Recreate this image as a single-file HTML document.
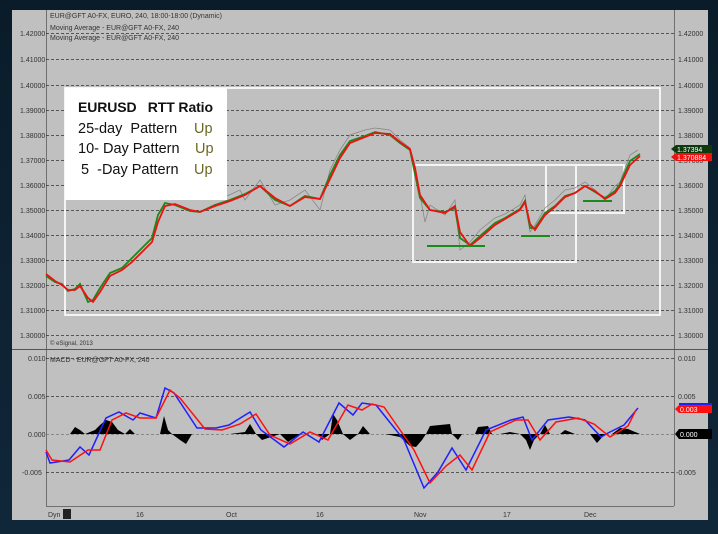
<!DOCTYPE html>
<html><head><meta charset="utf-8"><style>
body{margin:0;width:718px;height:534px;background:#0c2131;overflow:hidden;font-family:"Liberation Sans",sans-serif}
svg{position:absolute;left:0;top:0}
</style></head><body>
<svg width="718" height="534" viewBox="0 0 718 534">
<defs><linearGradient id="bg" x1="0" y1="0" x2="0" y2="1"><stop offset="0" stop-color="#0a1c2a"/><stop offset="1" stop-color="#10273a"/></linearGradient></defs>
<rect width="718" height="534" fill="url(#bg)"/>
<rect x="12" y="10" width="696" height="510" fill="#c0c0c0"/>
<g stroke="#707070" stroke-width="1" fill="none">
<line x1="46.5" y1="10" x2="46.5" y2="506"/>
<line x1="674.5" y1="10" x2="674.5" y2="506"/>
<line x1="12" y1="349.5" x2="708" y2="349.5" stroke="#555"/>
<line x1="46" y1="506.5" x2="674" y2="506.5"/>
</g>
<g stroke="#333" stroke-dasharray="3,2" stroke-width="0.8">
<line x1="46" y1="33.5" x2="674" y2="33.5"/><line x1="46" y1="59.5" x2="674" y2="59.5"/>
<line x1="46" y1="85.5" x2="674" y2="85.5"/><line x1="46" y1="110.5" x2="674" y2="110.5"/>
<line x1="46" y1="135.5" x2="674" y2="135.5"/><line x1="46" y1="160.5" x2="674" y2="160.5"/>
<line x1="46" y1="185.5" x2="674" y2="185.5"/><line x1="46" y1="210.5" x2="674" y2="210.5"/>
<line x1="46" y1="235.5" x2="674" y2="235.5"/><line x1="46" y1="260.5" x2="674" y2="260.5"/>
<line x1="46" y1="285.5" x2="674" y2="285.5"/><line x1="46" y1="310.5" x2="674" y2="310.5"/>
<line x1="46" y1="335.5" x2="674" y2="335.5"/>
<line x1="46" y1="358.5" x2="674" y2="358.5"/><line x1="46" y1="396.5" x2="674" y2="396.5"/>
<line x1="46" y1="472.5" x2="674" y2="472.5"/>
</g>
<line x1="46" y1="434.5" x2="674" y2="434.5" stroke="#777" stroke-dasharray="3,2" stroke-width="0.8"/>
<g font-size="7" fill="#333">
<text x="20" y="36">1.42000</text><text x="20" y="62">1.41000</text><text x="20" y="88">1.40000</text>
<text x="20" y="113">1.39000</text><text x="20" y="138">1.38000</text><text x="20" y="163">1.37000</text>
<text x="20" y="188">1.36000</text><text x="20" y="213">1.35000</text><text x="20" y="238">1.34000</text>
<text x="20" y="263">1.33000</text><text x="20" y="288">1.32000</text><text x="20" y="313">1.31000</text>
<text x="20" y="338">1.30000</text>
<text x="678" y="36">1.42000</text><text x="678" y="62">1.41000</text><text x="678" y="88">1.40000</text>
<text x="678" y="113">1.39000</text><text x="678" y="138">1.38000</text><text x="678" y="163">1.37000</text>
<text x="678" y="188">1.36000</text><text x="678" y="213">1.35000</text><text x="678" y="238">1.34000</text>
<text x="678" y="263">1.33000</text><text x="678" y="288">1.32000</text><text x="678" y="313">1.31000</text>
<text x="678" y="338">1.30000</text>
<text x="28" y="361">0.010</text><text x="28" y="399">0.005</text><text x="28" y="437">0.000</text><text x="22" y="475">-0.005</text>
<text x="678" y="361">0.010</text><text x="678" y="399">0.005</text><text x="676" y="475">-0.005</text>
<text x="50" y="18">EUR@GFT A0-FX, EURO, 240, 18:00-18:00 (Dynamic)</text>
<text x="50" y="30">Moving Average - EUR@GFT A0-FX, 240</text>
<text x="50" y="40">Moving Average - EUR@GFT A0-FX, 240</text>
<text x="50" y="345" font-size="6">© eSignal, 2013</text>
<text x="50" y="362">MACD - EUR@GFT A0-FX, 240</text>
<text x="48" y="517">Dyn</text>
<text x="136" y="517">16</text><text x="226" y="517">Oct</text><text x="316" y="517">16</text>
<text x="414" y="517">Nov</text><text x="503" y="517">17</text><text x="584" y="517">Dec</text>
</g>
<rect x="63" y="509" width="8" height="10" fill="#222"/>
<g stroke="#f4f4f4" stroke-width="2" fill="none">
<rect x="65" y="88" width="595" height="227"/>
<rect x="413" y="165" width="163" height="97"/>
<rect x="546" y="165" width="78" height="48"/>
</g>
<rect x="65" y="88" width="162" height="112" fill="#fff"/>
<g font-family="'Liberation Sans',sans-serif" font-size="14.5" fill="#111">
<text x="78" y="112" font-weight="bold" font-size="14" textLength="135">EURUSD&#160;&#160; RTT Ratio</text>
<text x="78" y="133">25-day&#160; Pattern</text><text x="194" y="133" fill="#6b6820">Up</text>
<text x="78" y="153">10- Day Pattern</text><text x="195" y="153" fill="#6b6820">Up</text>
<text x="81" y="174">5&#160; -Day Pattern</text><text x="194" y="174" fill="#6b6820">Up</text>
</g>
<polyline fill="none" stroke="#888" stroke-width="0.8" points="227,196 240,190 245,200 260,180 275,205 290,200 305,190 320,210 330,170 340,150 350,135 365,130 375,128 390,130 400,140 410,148 415,170 420,195 425,222 430,205 445,215 455,200 460,250 470,242 480,230 495,218 505,214 520,205 525,195 530,232 535,225 545,208 555,200 565,190 575,188 585,182 595,190 605,200 615,186 620,182 630,155 638,150"/>
<polyline fill="none" stroke="#1a8a1a" stroke-width="1.8" points="46,276 55,282 62,284 68,291 75,289 80,284 88,302 93,300 100,288 110,273 122,268 132,258 142,248 152,238 158,215 165,203 175,205 190,211 200,212 215,205 230,200 245,194 260,186 275,200 290,206 305,196 320,199 330,175 340,155 350,141 365,136 375,132 390,135 400,143 410,150 415,174 420,198 430,210 445,212 455,208 460,238 470,245 480,236 495,223 505,218 520,209 525,201 530,228 535,228 545,213 555,206 565,196 575,193 585,186 595,192 605,198 615,191 620,184 630,161 640,154"/>
<polyline fill="none" stroke="#f01010" stroke-width="1.8" points="46,274 55,281 62,285 68,290 75,290 80,286 88,298 93,302 100,292 110,276 122,270 132,262 142,252 152,242 158,222 165,206 175,204 190,210 200,212 215,206 230,201 245,195 260,186 275,198 290,206 305,197 320,199 330,179 340,158 350,143 365,137 375,133 390,134 400,142 410,149 415,168 420,195 430,210 445,213 455,206 460,232 470,246 480,238 495,225 505,219 520,210 525,202 530,224 535,230 545,215 555,207 565,197 575,193 585,186 595,191 605,199 615,193 620,186 630,165 640,156"/>
<g stroke="#1a8a1a" stroke-width="2">
<line x1="427" y1="246" x2="485" y2="246"/><line x1="521" y1="236" x2="550" y2="236"/><line x1="583" y1="201" x2="612" y2="201"/>
</g>
<polygon points="671,149 676,145 712,145 712,153 676,153" fill="#0c3a0c"/>
<text x="677" y="152" font-size="7" fill="#fff">1.37394</text>
<polygon points="671,157 676,153 712,153 712,161 676,161" fill="#f01010"/>
<text x="677" y="160" font-size="7" fill="#fff">1.370884</text>
<polygon fill="#000" points="46,434 70,434 75,427 80,430 85,434 95,430 100,425 106,420 112,422 118,430 125,434 130,429 135,434 160,434 164,416 168,430 172,434 180,440 186,444 192,434 215,434 230,434 245,432 250,424 256,434 262,440 268,438 280,434 288,442 300,434 318,434 322,440 330,434 333,414 337,420 343,434 350,440 358,434 363,426 370,434 385,434 400,437 410,446 416,447 422,440 426,434 430,426 440,425 450,424 452,434 458,440 462,434 475,434 478,427 488,426 492,434 500,434 510,432 520,434 526,440 530,450 534,440 540,434 545,425 550,434 560,434 565,430 575,434 590,434 597,443 605,434 612,434 620,428 628,429 640,434"/>
<polyline fill="none" stroke="#2020ff" stroke-width="1.5" points="46,452 50,463 69,460 80,447 89,455 106,418 119,412 133,420 140,413 156,418 165,388 174,393 197,428 216,428 229,425 250,412 261,430 284,447 303,432 319,442 339,403 353,415 362,403 376,405 404,440 424,488 438,472 452,448 466,470 486,430 511,420 523,417 532,440 548,420 569,417 585,420 601,437 608,433 624,425 638,408"/>
<polyline fill="none" stroke="#ff1010" stroke-width="1.5" points="46,450 52,460 70,462 88,450 100,450 112,420 126,413 140,418 156,418 170,390 180,398 205,429 222,430 240,424 256,414 270,435 290,444 310,432 328,440 348,405 362,410 372,404 384,407 414,450 430,483 446,466 460,455 472,470 490,432 516,420 528,420 540,440 556,422 578,418 594,424 610,437 628,426 636,410"/>
<polygon points="675,409 679,405 712,405 712,413 679,413" fill="#ff1010"/>
<rect x="679" y="403" width="33" height="2" fill="#2020ff"/>
<text x="680" y="412" font-size="7" fill="#fff">0.003</text>
<polygon points="675,434 679,429 712,429 712,439 679,439" fill="#000"/>
<text x="680" y="437" font-size="7" fill="#fff">0.000</text>
</svg>
</body></html>
